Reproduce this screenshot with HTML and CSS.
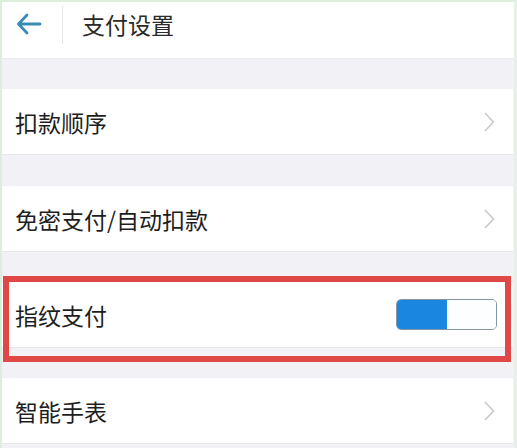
FILE: index.html
```html
<!DOCTYPE html>
<html lang="zh-CN">
<head>
<meta charset="utf-8">
<link rel="stylesheet" href="styles.css">
</head>
<body>
<div class="frame">
  <header class="header">
    <div class="back">
      <svg width="26" height="22" viewBox="0 0 26 22"><path d="M24 11H3M11 2 2.5 11 11 20" fill="none" stroke="#3a8cb3" stroke-width="2.8" stroke-linecap="round" stroke-linejoin="round"/></svg>
    </div>
    <div class="divider"></div>
    <div class="title">支付设置</div>
  </header>

  <div class="group g1">
    <div class="row"><span class="label">扣款顺序</span><span class="chev"><svg width="12" height="22" viewBox="0 0 12 22"><path d="M2 2l8.5 9L2 20" fill="none" stroke="#c9c9cc" stroke-width="1.6"/></svg></span></div>
  </div>
  <div class="group g2">
    <div class="row"><span class="label">免密支付/自动扣款</span><span class="chev"><svg width="12" height="22" viewBox="0 0 12 22"><path d="M2 2l8.5 9L2 20" fill="none" stroke="#c9c9cc" stroke-width="1.6"/></svg></span></div>
  </div>
  <div class="group g3 highlight">
    <div class="row toggle-row"><span class="label">指纹支付</span><span class="toggle"><span class="on"></span><span class="off"></span></span></div>
    <div class="mark"></div>
  </div>
  <div class="group g4">
    <div class="row"><span class="label">智能手表</span><span class="chev"><svg width="12" height="22" viewBox="0 0 12 22"><path d="M2 2l8.5 9L2 20" fill="none" stroke="#c9c9cc" stroke-width="1.6"/></svg></span></div>
  </div>
</div>
</body>
</html>
```

FILE: styles.css
```css
html, body {
  margin: 0;
  padding: 0;
  background: #f2f2f6;
}
body {
  font-family: "Noto Sans CJK SC", "Noto Sans", sans-serif;
  color: #222;
}
.frame {
  width: 517px;
  height: 448px;
  box-sizing: border-box;
  border-top: 2px solid #dcefdc;
  border-left: 2px solid #dcefdc;
  border-right: 3px solid #e6f2e6;
  overflow: hidden;
}
.header {
  height: 56px;
  background: #fff;
  border-bottom: 1px solid #e9e9ee;
  display: flex;
  align-items: flex-start;
}
.back {
  width: 60px;
  height: 44px;
  display: flex;
  align-items: center;
  padding-left: 14px;
  box-sizing: border-box;
}
.divider {
  width: 1px;
  height: 38px;
  margin-top: 4px;
  background: #e6e6e6;
}
.title {
  height: 44px;
  line-height: 44px;
  margin-left: 19px;
  font-size: 23px;
  color: #2a2a2a;
}
.group {
  margin-top: 30px;
  position: relative;
}
.g2 { margin-top: 31px; }
.row {
  height: 65px;
  background: #fff;
  border-bottom: 1px solid #e6e6ea;
  display: flex;
  align-items: center;
  justify-content: space-between;
  padding: 0 18px 0 13px;
  margin-right: 1px;
}
.toggle-row {
  padding-right: 16px;
}
.label {
  font-size: 23px;
  color: #1e1e1e;
}
.chev {
  display: flex;
  align-items: center;
}
.toggle {
  display: flex;
  width: 101px;
  height: 31px;
  box-sizing: border-box;
  border: 1px solid #8597a6;
  border-radius: 5px;
  overflow: hidden;
}
.toggle .on {
  width: 50px;
  background: #1a86e0;
}
.toggle .off {
  flex: 1;
  background: #fcfeff;
}
.mark {
  position: absolute;
  left: 1px;
  right: 3px;
  top: -6px;
  height: 86px;
  box-sizing: border-box;
  border: 6px solid #e04848;
  pointer-events: none;
}
```
